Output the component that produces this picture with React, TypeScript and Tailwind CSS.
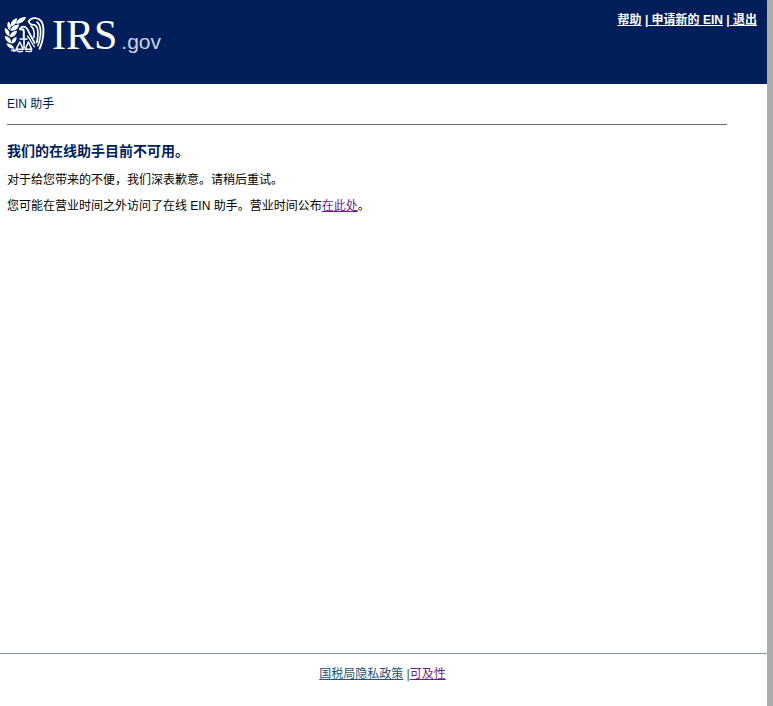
function Emblem() {
  return (
    <svg viewBox="0 0 60 52" className="h-[52px] w-[60px] shrink-0" fill="none" aria-hidden="true">
      <g fill="#fff">
        <path d="M26 9C20.4 9 17.2 11.6 16 15.8C20.8 16 24.6 13.6 26 9Z" />
        <path d="M16.8 10C12.2 11.6 10.4 14.6 11 18.6C15.4 17.2 17.4 14.2 16.8 10Z" />
        <path d="M8.4 13.6C6.6 16.2 7 19.6 9.4 22.4C11.6 19.8 11.6 16.4 8.4 13.6Z" />
        <path d="M19.2 16.4C14.8 16.4 11.4 18.4 10.4 22.8C15 23.2 18.4 21 19.2 16.4Z" />
        <path d="M4.8 20C4.4 24 5.8 26.8 9.4 28.6C10.2 24.4 8.6 21.4 4.8 20Z" />
        <path d="M17 22.8C13 23 10.2 25 9.8 29.2C14 29.2 16.6 27 17 22.8Z" />
        <path d="M4.8 28C5.2 32 7.4 34.6 11.4 35.2C11.2 31 8.8 28.8 4.8 28Z" />
        <path d="M16.6 29C13.2 29.8 11.2 32 11.6 35.8C15 35 16.8 32.8 16.6 29Z" />
        <path d="M6.2 35.4C7.6 39.2 10.4 41 14.4 40.8C13 37 10.2 35.4 6.2 35.4Z" />
        <path d="M10.4 42C12.6 44.2 15 44.2 17.4 42.6C15 40.8 12.8 40.8 10.4 42Z" />
      </g>
      <g stroke="#fff" strokeLinecap="round" strokeLinejoin="round">
        <path d="M20 21.2C20.8 18.8 23.2 18 25.6 19.2C27.4 20.2 28 21.8 28.8 24L34.6 35" strokeWidth="1.8" />
        <path d="M20 21.2L23.4 21.4L23.8 24V29.8" strokeWidth="2" />
        <path d="M20.2 31H27M24 31V40" strokeWidth="1.6" />
        <path d="M34.6 38.8C30.8 34 30.4 31 27.4 28" strokeWidth="1.2" />
        <path d="M28.8 13.4C30.8 9.4 37.4 8.8 41 12.8C44.6 17 44.2 31 39.6 40.6" strokeWidth="1.9" />
        <path d="M28.8 13.4C29.2 15.8 31.4 17 34.4 16.8C38.2 18.8 38.6 26 36.8 34.4" strokeWidth="1.7" />
        <path d="M31 18.2C33.6 20.2 34.6 24.6 34 29.4M37 14C41.6 17.6 41.6 27 38 37.6" strokeWidth="1.6" />
        <path d="M19.8 34L16.2 41.2H23.2L19.8 34ZM28.4 34L25.2 41.2H31.8L28.4 34Z" strokeWidth="1.5" />
        <path d="M17.4 43.2Q20 44.2 22.6 43.2M25.8 43.2Q28.8 44.2 31.6 43" strokeWidth="1.4" />
      </g>
    </svg>
  );
}

export default function App() {
  return (
    <div className="flex min-h-screen flex-col border-r-[6px] border-[#ababab] bg-white font-['Liberation_Sans','Noto_Sans_CJK_SC',sans-serif] text-xs text-black">
      <header className="flex h-[84px] items-start justify-between bg-[#001e5a] text-white">
        <a href="#" aria-label="IRS.gov" className="flex items-baseline pt-2">
          <span className="flex h-[52px] w-[52px] self-start">
            <Emblem />
          </span>
          <span className="font-['Liberation_Serif',serif] text-[42px] leading-[54px]">IRS</span>
          <span className="pl-1 text-[21px] text-[#ccd2e0]">.gov</span>
        </a>
        <nav className="pt-3 pr-2.5 leading-4 font-bold">
          <a href="#" className="underline">帮助</a>
          {' |'}
          <a href="#" className="underline"> 申请新的 EIN</a>
          {' |'}
          <a href="#" className="underline"> 退出</a>
        </nav>
      </header>
      <main className="grow pl-[7px]">
        <div className="mr-10 border-b border-[#666] pt-3 pb-3 leading-4 text-[#001e5a]">EIN 助手</div>
        <h1 className="mt-4 text-sm leading-5 font-bold text-[#001e5a]">我们的在线助手目前不可用。</h1>
        <p className="mt-[11px] leading-4">对于给您带来的不便，我们深表歉意。请稍后重试。</p>
        <p className="mt-2.5 leading-4">
          您可能在营业时间之外访问了在线 EIN 助手。营业时间公布
          <a href="#" className="text-[#6b1d8a] underline">在此处</a>。
        </p>
      </main>
      <footer className="border-t border-t-[#7b929f] pt-3 pr-0.5 pb-6 text-center leading-4 text-[#215482]">
        <a href="#" className="underline">国税局隐私政策</a>
        {' |'}
        <a href="#" className="text-[#6b1d8a] underline">可及性</a>
      </footer>
    </div>
  );
}
